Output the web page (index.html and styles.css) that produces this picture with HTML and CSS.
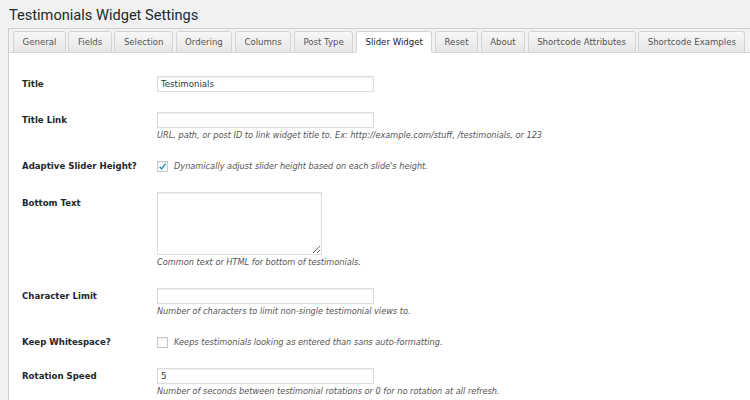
FILE: index.html
```html
<!DOCTYPE html>
<html lang="en">

<head>
    <meta charset="UTF-8">
    <title>Testimonials Widget Settings</title>
    <link rel="stylesheet" href="styles.css">
</head>

<body>
    <div class="wrap">
        <h1>Testimonials Widget Settings</h1>
        <div class="tabs-box">
            <ul class="tabs">
                <li>General</li>
                <li>Fields</li>
                <li>Selection</li>
                <li>Ordering</li>
                <li>Columns</li>
                <li>Post Type</li>
                <li class="active">Slider Widget</li>
                <li>Reset</li>
                <li>About</li>
                <li>Shortcode Attributes</li>
                <li>Shortcode Examples</li>
            </ul>
            <div class="panel">
                <div class="row">
                    <div class="label">Title</div>
                    <div class="field">
                        <input class="text" type="text" value="Testimonials">
                    </div>
                </div>
                <div class="row">
                    <div class="label">Title Link</div>
                    <div class="field">
                        <input class="text" type="text">
                        <div class="desc">URL, path, or post ID to link widget title to. Ex: http://example.com/stuff, /testimonials, or 123</div>
                    </div>
                </div>
                <div class="row">
                    <div class="label short">Adaptive Slider Height?</div>
                    <div class="field check">
                        <span class="box"><svg width="11" height="11" viewBox="0 0 11 11"><path d="M2.6 5.6 L4.6 7.9 L8.6 2.6" fill="none" stroke="#1e8cbe" stroke-width="1.4"/></svg></span>
                        <span class="desc">Dynamically adjust slider height based on each slide's height.</span>
                    </div>
                </div>
                <div class="row">
                    <div class="label tall">Bottom Text</div>
                    <div class="field">
                        <textarea class="area"></textarea>
                        <div class="desc">Common text or HTML for bottom of testimonials.</div>
                    </div>
                </div>
                <div class="row">
                    <div class="label">Character Limit</div>
                    <div class="field">
                        <input class="text" type="text">
                        <div class="desc">Number of characters to limit non-single testimonial views to.</div>
                    </div>
                </div>
                <div class="row">
                    <div class="label short">Keep Whitespace?</div>
                    <div class="field check">
                        <span class="box"></span>
                        <span class="desc">Keeps testimonials looking as entered than sans auto-formatting.</span>
                    </div>
                </div>
                <div class="row">
                    <div class="label">Rotation Speed</div>
                    <div class="field">
                        <input class="text" type="text" value="5">
                        <div class="desc">Number of seconds between testimonial rotations or 0 for no rotation at all refresh.</div>
                    </div>
                </div>
            </div>
        </div>
    </div>
</body>
</html>
```

FILE: styles.css
```css
body {
    margin: 0;
    background-color: #f1f1f1;
    font-family: "DejaVu Sans", Verdana, sans-serif;
    font-size: 8.6px;
    color: #444;
    overflow: hidden;
}

.wrap {
    margin-left: 8px;
    margin-right: -30px;
}

h1 {
    font-family: Roboto, "Open Sans", sans-serif;
    font-weight: 400;
    font-size: 14.6px;
    line-height: 20px;
    color: #23282d;
    margin: 0;
    padding: 5px 0 3px 1px;
}

.tabs-box {
    border-top: 1px solid #cfcfcf;
    border-left: 1px solid #cfcfcf;
}

.tabs {
    list-style: none;
    margin: 0;
    padding: 2px 0 0 4px;
    display: flex;
    gap: 2.6px;
}

.tabs li {
    line-height: 20px;
    padding: 0 8.5px;
    margin-bottom: -1px;
    color: #555;
    border: 1px solid #d3d3d3;
    border-radius: 3px 3px 0 0;
    background: linear-gradient(#f7f7f7, #e6e6e6);
}

.tabs li.active {
    background: #fff;
    color: #222;
    border-bottom-color: #fff;
}

.panel {
    background-color: #fff;
    border-top: 1px solid #d3d3d3;
    padding: 13px 0 40px 13px;
}

.row {
    display: flex;
    padding: 10px 0;
}

.label {
    width: 135px;
    flex-shrink: 0;
    font-weight: bold;
    line-height: 16px;
    color: #23282d;
}

.label.short {
    line-height: 11px;
}

.label.tall {
    padding-top: 3px;
}

.text {
    display: block;
    box-sizing: border-box;
    width: 217px;
    height: 16px;
    margin: 0;
    padding: 0 3px;
    border: 1px solid #ddd;
    box-shadow: inset 0 1px 2px rgba(0, 0, 0, 0.07);
    font: inherit;
    color: #32373c;
    outline: none;
}

.area {
    display: block;
    box-sizing: border-box;
    width: 165px;
    height: 63px;
    margin: 0;
    border: 1px solid #ddd;
    box-shadow: inset 0 1px 2px rgba(0, 0, 0, 0.07);
    font: inherit;
}

.desc {
    font-style: italic;
    font-size: 8.2px;
    color: #555;
    line-height: 12px;
    margin-top: 1px;
}

.check {
    display: flex;
    align-items: center;
    gap: 6px;
    line-height: 11px;
}

.check .desc {
    margin-top: 0;
    line-height: 11px;
}

.box {
    display: block;
    box-sizing: border-box;
    width: 11px;
    height: 11px;
    border: 1px solid #c4c8cc;
    box-shadow: inset 0 1px 2px rgba(0, 0, 0, 0.08);
    background: #fff;
    position: relative;
}

.box svg {
    position: absolute;
    left: -1px;
    top: -1px;
}
```
